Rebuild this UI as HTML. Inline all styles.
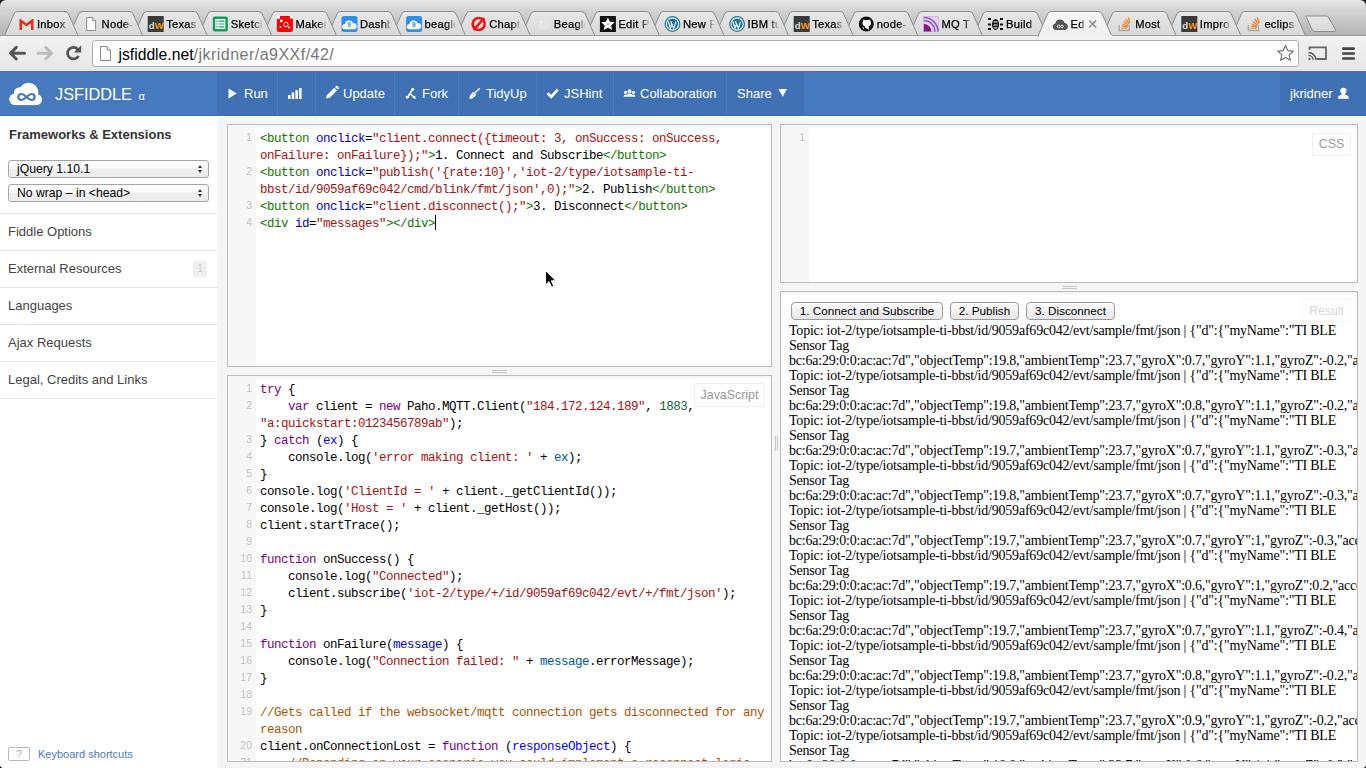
<!DOCTYPE html>
<html><head><meta charset="utf-8">
<style>
*{margin:0;padding:0;box-sizing:border-box}
html,body{width:1366px;height:768px;overflow:hidden;background:#f5f5f5;font-family:"Liberation Sans",sans-serif}
.a{position:absolute}
#tabstrip{left:0;top:0;width:1366px;height:36px;background:linear-gradient(#e6e6e6,#d2d2d2 40%,#c3c3c3)}
#toolbar{left:0;top:35px;width:1366px;height:37px;background:linear-gradient(#f2f2f2,#e6e6e6);border-top:1px solid #9e9e9e;border-bottom:1px solid #6a6a6a}
#omni{left:92px;top:40px;width:1207px;height:27px;background:#fff;border:1px solid #b0b0b0;border-radius:3px}
#url{left:118.5px;top:45px;font-size:16px;letter-spacing:0.48px;color:#777;white-space:pre;line-height:19px}
#url b{font-weight:normal;color:#000;font-size:15.7px;letter-spacing:0}
#header{left:0;top:72px;width:1366px;height:44px;background:#4679bd;border-bottom:1px solid #356cb5}
#actions{left:217px;top:72px;width:587px;height:43px;background:#3f71b4}
#user{left:1280px;top:72px;width:86px;height:43px;background:#3f71b4}
.sep{position:absolute;top:72px;width:1px;height:43px;background:#4a7bbd}
.nav{position:absolute;top:86px;color:#fff;font-size:13px;line-height:15px;white-space:pre}
#whiteline{left:0;top:116px;width:1366px;height:1px;background:#fdfdfb}
#sidebar{left:0;top:116px;width:217px;height:652px;background:#fff}
.sbitem{position:absolute;left:0;width:217px;height:37px;border-top:1px solid #e4e4e4;font-size:13px;color:#444;padding-left:8px;line-height:36px}
.panel{position:absolute;background:#fff;border:1px solid #bcbcbc;overflow:hidden;box-shadow:inset 0 2px 3px rgba(0,0,0,0.05)}
.gutter{position:absolute;left:0;top:0;width:28px;height:100%;background:#f7f7f7}
.code{position:absolute;font-family:"Liberation Mono",monospace;font-size:12.5px;letter-spacing:-0.5px;line-height:17px;margin-top:2px;white-space:pre;color:#000}
.ln{position:absolute;font-family:"Liberation Sans",sans-serif;font-size:10.5px;line-height:17px;margin-top:0px;color:#c4c4c4;text-align:right;width:24px;left:0}
.t{color:#170}.at{color:#00c}.s{color:#a11}.k{color:#708}.d{color:#00f}.v2{color:#05a}.n{color:#164}.c{color:#a50}
.label{position:absolute;border:1px solid #f0f0f0;background:#fff;color:#999;font-size:12.4px;text-align:center}
.hh{position:absolute;height:1px;background:#bbb}
.res{position:absolute;left:8px;font-family:"Liberation Serif",serif;font-size:14px;letter-spacing:-0.21px;line-height:15px;margin-top:0.5px;white-space:pre;color:#000}
.btn{position:absolute;height:18px;border:1px solid #9a9a9a;border-radius:4px;background:linear-gradient(#fff,#f0f0f0 50%,#e8e8e8);font-size:11.7px;line-height:16px;text-align:center;color:#000}
.sel{position:absolute;left:8px;width:201px;height:18px;border:1px solid #a6a6a6;border-radius:3px;background:linear-gradient(#fff,#fbfbfb 40%,#eeeeee 52%,#ececec);font-size:12.2px;line-height:16px;padding-left:8px;color:#000}
.sel:after{content:"";position:absolute;right:6px;top:3.5px;width:0;height:0;border-left:2.7px solid transparent;border-right:2.7px solid transparent;border-bottom:3.2px solid #333}
.sel:before{content:"";position:absolute;right:6px;top:8.8px;width:0;height:0;border-left:2.7px solid transparent;border-right:2.7px solid transparent;border-top:3.2px solid #333}
.hdl{position:absolute;background:#c4c4c4}
</style></head><body>
<svg class="a" style="left:0;top:0" width="1366" height="36" viewBox="0 0 1366 36">
<defs><linearGradient id="tsg" x1="0" y1="0" x2="0" y2="1"><stop offset="0" stop-color="#e7e7e7"/><stop offset="0.3" stop-color="#d3d3d3"/><stop offset="1" stop-color="#b2b2b2"/></linearGradient>
<linearGradient id="itg" x1="0" y1="0" x2="0" y2="1"><stop offset="0" stop-color="#e7e7e7"/><stop offset="1" stop-color="#d8d8d8"/></linearGradient>
<linearGradient id="atg" x1="0" y1="0" x2="0" y2="1"><stop offset="0" stop-color="#f6f6f6"/><stop offset="1" stop-color="#efefef"/></linearGradient>
<linearGradient id="fade" x1="0" y1="0" x2="1" y2="0"><stop offset="0" stop-color="#fff"/><stop offset="0.7" stop-color="#fff"/><stop offset="1" stop-color="#000"/></linearGradient>
</defs>
<rect width="1366" height="36" fill="url(#tsg)"/>
<path d="M0 0h6a6 6 0 0 0-6 6z" fill="#222"/><path d="M1366 0h-6a6 6 0 0 1 6 6z" fill="#222"/>
<path d="M1306 16.5 Q1305 16 1306.5 16 L1326 16 Q1328 16 1329 18 L1335.5 30 Q1336.5 31.5 1334.5 31.5 L1315 31.5 Q1313 31.5 1312 29.5 Z" fill="url(#itg)" stroke="#8c8c8c" stroke-width="1"/>
<path d="M1231.9 35.5 L1241.4 14 Q1242.4 11.5 1244.9 11.5 L1292.4 11.5 Q1294.9 11.5 1295.9 14 L1305.4 35.5 Z" fill="url(#itg)"/>
<path d="M1231.9 35.5 L1241.4 14 Q1242.4 11.5 1244.9 11.5 L1292.4 11.5 Q1294.9 11.5 1295.9 14 L1305.4 35.5" fill="none" stroke="#8e8e8e" stroke-width="1"/>
<g transform="translate(1245.9,16)"><path d="M2.5 9v5.5h10v-5.5" fill="none" stroke="#a8a8a8" stroke-width="1.3"/><path d="M4.5 12.3h6" stroke="#c8a070" stroke-width="1.2"/><path d="M5.2 10.2l5.7.9M5.8 8l5.3 2.3M7 5.5l4.6 3.6M9 3.2l3.5 4.6M11.5 1.5l1.8 5.3" stroke="#f48024" stroke-width="1.3"/></g>
<mask id="m12459" maskUnits="userSpaceOnUse" x="1263.4" y="12" width="33" height="24"><rect x="1263.4" y="12" width="33" height="24" fill="url(#fade)"/></mask>
<text x="1264.4" y="28.1" font-family="Liberation Sans" font-size="11.2" letter-spacing="0.25" fill="#000" stroke="#000" stroke-width="0.25" mask="url(#m12459)">eclips</text>
<path d="M1167.3 35.5 L1176.8 14 Q1177.8 11.5 1180.3 11.5 L1227.8 11.5 Q1230.3 11.5 1231.3 14 L1240.8 35.5 Z" fill="url(#itg)"/>
<path d="M1167.3 35.5 L1176.8 14 Q1177.8 11.5 1180.3 11.5 L1227.8 11.5 Q1230.3 11.5 1231.3 14 L1240.8 35.5" fill="none" stroke="#8e8e8e" stroke-width="1"/>
<g transform="translate(1181.3,16)"><rect x="0" y="0" width="16" height="16" fill="#3a3a3a"/><text x="1" y="12.5" font-family="Liberation Sans" font-weight="bold" font-size="9.5" fill="#ddd">d</text><text x="7" y="12.5" font-family="Liberation Sans" font-weight="bold" font-size="9.5" fill="#f39c12">W</text></g>
<mask id="m11813" maskUnits="userSpaceOnUse" x="1198.8" y="12" width="33" height="24"><rect x="1198.8" y="12" width="33" height="24" fill="url(#fade)"/></mask>
<text x="1199.8" y="28.1" font-family="Liberation Sans" font-size="11.2" letter-spacing="0.25" fill="#000" stroke="#000" stroke-width="0.25" mask="url(#m11813)">Impro</text>
<path d="M1102.7 35.5 L1112.2 14 Q1113.2 11.5 1115.7 11.5 L1163.2 11.5 Q1165.7 11.5 1166.7 14 L1176.2 35.5 Z" fill="url(#itg)"/>
<path d="M1102.7 35.5 L1112.2 14 Q1113.2 11.5 1115.7 11.5 L1163.2 11.5 Q1165.7 11.5 1166.7 14 L1176.2 35.5" fill="none" stroke="#8e8e8e" stroke-width="1"/>
<g transform="translate(1116.7,16)"><path d="M2.5 9v5.5h10v-5.5" fill="none" stroke="#a8a8a8" stroke-width="1.3"/><path d="M4.5 12.3h6" stroke="#c8a070" stroke-width="1.2"/><path d="M5.2 10.2l5.7.9M5.8 8l5.3 2.3M7 5.5l4.6 3.6M9 3.2l3.5 4.6M11.5 1.5l1.8 5.3" stroke="#f48024" stroke-width="1.3"/></g>
<mask id="m11167" maskUnits="userSpaceOnUse" x="1134.2" y="12" width="33" height="24"><rect x="1134.2" y="12" width="33" height="24" fill="url(#fade)"/></mask>
<text x="1135.2" y="28.1" font-family="Liberation Sans" font-size="11.2" letter-spacing="0.25" fill="#000" stroke="#000" stroke-width="0.25" mask="url(#m11167)">Most</text>
<path d="M973.5 35.5 L983.0 14 Q984.0 11.5 986.5 11.5 L1034.0 11.5 Q1036.5 11.5 1037.5 14 L1047.0 35.5 Z" fill="url(#itg)"/>
<path d="M973.5 35.5 L983.0 14 Q984.0 11.5 986.5 11.5 L1034.0 11.5 Q1036.5 11.5 1037.5 14 L1047.0 35.5" fill="none" stroke="#8e8e8e" stroke-width="1"/>
<g transform="translate(987.5,16)"><g fill="#111"><ellipse cx="8" cy="8.5" rx="3.5" ry="5.5"/><rect x="0.5" y="2" width="3" height="2"/><rect x="12.5" y="2" width="3" height="2"/><rect x="0.5" y="7.5" width="3" height="2"/><rect x="12.5" y="7.5" width="3" height="2"/><rect x="0.5" y="12" width="3" height="2"/><rect x="12.5" y="12" width="3" height="2"/></g><path d="M6 6h4M6 9h4M6 12h4" stroke="#fff" stroke-width="1"/></g>
<mask id="m9875" maskUnits="userSpaceOnUse" x="1005.0" y="12" width="33" height="24"><rect x="1005.0" y="12" width="33" height="24" fill="url(#fade)"/></mask>
<text x="1006.0" y="28.1" font-family="Liberation Sans" font-size="11.2" letter-spacing="0.25" fill="#000" stroke="#000" stroke-width="0.25" mask="url(#m9875)">Build</text>
<path d="M908.9 35.5 L918.4 14 Q919.4 11.5 921.9 11.5 L969.4 11.5 Q971.9 11.5 972.9 14 L982.4 35.5 Z" fill="url(#itg)"/>
<path d="M908.9 35.5 L918.4 14 Q919.4 11.5 921.9 11.5 L969.4 11.5 Q971.9 11.5 972.9 14 L982.4 35.5" fill="none" stroke="#8e8e8e" stroke-width="1"/>
<g transform="translate(922.9,16)"><rect x="0.5" y="0.5" width="15" height="15" fill="#e4d6f4" stroke="#cdb6e6" stroke-width="1"/><path d="M1 8A7.5 7.5 0 0 1 8.5 15.5H1z" fill="#86168f"/><path d="M1 4.5A11 11 0 0 1 12 15.5M1 1.5A14 14 0 0 1 15 15.5" fill="none" stroke="#8a5cc4" stroke-width="1.6"/></g>
<mask id="m9229" maskUnits="userSpaceOnUse" x="940.4" y="12" width="33" height="24"><rect x="940.4" y="12" width="33" height="24" fill="url(#fade)"/></mask>
<text x="941.4" y="28.1" font-family="Liberation Sans" font-size="11.2" letter-spacing="0.25" fill="#000" stroke="#000" stroke-width="0.25" mask="url(#m9229)">MQ T</text>
<path d="M844.3 35.5 L853.8 14 Q854.8 11.5 857.3 11.5 L904.8 11.5 Q907.3 11.5 908.3 14 L917.8 35.5 Z" fill="url(#itg)"/>
<path d="M844.3 35.5 L853.8 14 Q854.8 11.5 857.3 11.5 L904.8 11.5 Q907.3 11.5 908.3 14 L917.8 35.5" fill="none" stroke="#8e8e8e" stroke-width="1"/>
<g transform="translate(858.3,16)"><circle cx="8" cy="8" r="7.5" fill="#111"/><path d="M5.5 13.8v-2.2c-1.5.1-2-.9-2.3-1.5M10.5 13.8v-2.3c0-.7-.3-1-.6-1.2 1.5-.2 2.8-.9 2.8-3.2 0-.8-.3-1.4-.7-1.9.1-.3.2-1-.1-1.8-.6 0-1.3.4-1.8.8a6 6 0 0 0-3.3 0c-.5-.4-1.2-.8-1.8-.8-.3.8-.2 1.5-.1 1.8-.4.5-.7 1.1-.7 1.9 0 2.3 1.3 3 2.8 3.2-.3.2-.5.6-.6 1" fill="#fff"/><circle cx="8" cy="6.5" r="0" /></g>
<mask id="m8583" maskUnits="userSpaceOnUse" x="875.8" y="12" width="33" height="24"><rect x="875.8" y="12" width="33" height="24" fill="url(#fade)"/></mask>
<text x="876.8" y="28.1" font-family="Liberation Sans" font-size="11.2" letter-spacing="0.25" fill="#000" stroke="#000" stroke-width="0.25" mask="url(#m8583)">node-</text>
<path d="M779.7 35.5 L789.2 14 Q790.2 11.5 792.7 11.5 L840.2 11.5 Q842.7 11.5 843.7 14 L853.2 35.5 Z" fill="url(#itg)"/>
<path d="M779.7 35.5 L789.2 14 Q790.2 11.5 792.7 11.5 L840.2 11.5 Q842.7 11.5 843.7 14 L853.2 35.5" fill="none" stroke="#8e8e8e" stroke-width="1"/>
<g transform="translate(793.7,16)"><rect x="0" y="0" width="16" height="16" fill="#3a3a3a"/><text x="1" y="12.5" font-family="Liberation Sans" font-weight="bold" font-size="9.5" fill="#ddd">d</text><text x="7" y="12.5" font-family="Liberation Sans" font-weight="bold" font-size="9.5" fill="#f39c12">W</text></g>
<mask id="m7937" maskUnits="userSpaceOnUse" x="811.2" y="12" width="33" height="24"><rect x="811.2" y="12" width="33" height="24" fill="url(#fade)"/></mask>
<text x="812.2" y="28.1" font-family="Liberation Sans" font-size="11.2" letter-spacing="0.25" fill="#000" stroke="#000" stroke-width="0.25" mask="url(#m7937)">Texas</text>
<path d="M715.1 35.5 L724.6 14 Q725.6 11.5 728.1 11.5 L775.6 11.5 Q778.1 11.5 779.1 14 L788.6 35.5 Z" fill="url(#itg)"/>
<path d="M715.1 35.5 L724.6 14 Q725.6 11.5 728.1 11.5 L775.6 11.5 Q778.1 11.5 779.1 14 L788.6 35.5" fill="none" stroke="#8e8e8e" stroke-width="1"/>
<g transform="translate(729.1,16)"><circle cx="8" cy="8" r="7.3" fill="#fff" stroke="#21759b" stroke-width="1.3"/><circle cx="8" cy="8" r="5.6" fill="#21759b"/><path d="M3.6 5.2l2.4 6.8 1.6-4.5M6.2 5.2l3 7 2.3-6.6" stroke="#fff" stroke-width="1.1" fill="none"/></g>
<mask id="m7291" maskUnits="userSpaceOnUse" x="746.6" y="12" width="33" height="24"><rect x="746.6" y="12" width="33" height="24" fill="url(#fade)"/></mask>
<text x="747.6" y="28.1" font-family="Liberation Sans" font-size="11.2" letter-spacing="0.25" fill="#000" stroke="#000" stroke-width="0.25" mask="url(#m7291)">IBM tu</text>
<path d="M650.5 35.5 L660.0 14 Q661.0 11.5 663.5 11.5 L711.0 11.5 Q713.5 11.5 714.5 14 L724.0 35.5 Z" fill="url(#itg)"/>
<path d="M650.5 35.5 L660.0 14 Q661.0 11.5 663.5 11.5 L711.0 11.5 Q713.5 11.5 714.5 14 L724.0 35.5" fill="none" stroke="#8e8e8e" stroke-width="1"/>
<g transform="translate(664.5,16)"><circle cx="8" cy="8" r="7.3" fill="#fff" stroke="#21759b" stroke-width="1.3"/><circle cx="8" cy="8" r="5.6" fill="#21759b"/><path d="M3.6 5.2l2.4 6.8 1.6-4.5M6.2 5.2l3 7 2.3-6.6" stroke="#fff" stroke-width="1.1" fill="none"/></g>
<mask id="m6645" maskUnits="userSpaceOnUse" x="682.0" y="12" width="33" height="24"><rect x="682.0" y="12" width="33" height="24" fill="url(#fade)"/></mask>
<text x="683.0" y="28.1" font-family="Liberation Sans" font-size="11.2" letter-spacing="0.25" fill="#000" stroke="#000" stroke-width="0.25" mask="url(#m6645)">New P</text>
<path d="M585.9 35.5 L595.4 14 Q596.4 11.5 598.9 11.5 L646.4 11.5 Q648.9 11.5 649.9 14 L659.4 35.5 Z" fill="url(#itg)"/>
<path d="M585.9 35.5 L595.4 14 Q596.4 11.5 598.9 11.5 L646.4 11.5 Q648.9 11.5 649.9 14 L659.4 35.5" fill="none" stroke="#8e8e8e" stroke-width="1"/>
<g transform="translate(599.9,16)"><rect x="0" y="0" width="16" height="16" fill="#111"/><path d="M8 1.5l2 4.3 4.7.5-3.5 3.2 1 4.6L8 11.7l-4.2 2.4 1-4.6L1.3 6.3 6 5.8z" fill="#fff"/><circle cx="8" cy="8" r="1.3" fill="#bbb"/></g>
<mask id="m5999" maskUnits="userSpaceOnUse" x="617.4" y="12" width="33" height="24"><rect x="617.4" y="12" width="33" height="24" fill="url(#fade)"/></mask>
<text x="618.4" y="28.1" font-family="Liberation Sans" font-size="11.2" letter-spacing="0.25" fill="#000" stroke="#000" stroke-width="0.25" mask="url(#m5999)">Edit P</text>
<path d="M521.3 35.5 L530.8 14 Q531.8 11.5 534.3 11.5 L581.8 11.5 Q584.3 11.5 585.3 14 L594.8 35.5 Z" fill="url(#itg)"/>
<path d="M521.3 35.5 L530.8 14 Q531.8 11.5 534.3 11.5 L581.8 11.5 Q584.3 11.5 585.3 14 L594.8 35.5" fill="none" stroke="#8e8e8e" stroke-width="1"/>
<g transform="translate(535.3,16)"><circle cx="8" cy="8" r="6" fill="#e4e4e4"/><circle cx="6" cy="6" r="1.5" fill="#f0f0f0"/></g>
<mask id="m5353" maskUnits="userSpaceOnUse" x="552.8" y="12" width="33" height="24"><rect x="552.8" y="12" width="33" height="24" fill="url(#fade)"/></mask>
<text x="553.8" y="28.1" font-family="Liberation Sans" font-size="11.2" letter-spacing="0.25" fill="#000" stroke="#000" stroke-width="0.25" mask="url(#m5353)">Beagle</text>
<path d="M456.7 35.5 L466.2 14 Q467.2 11.5 469.7 11.5 L517.2 11.5 Q519.7 11.5 520.7 14 L530.2 35.5 Z" fill="url(#itg)"/>
<path d="M456.7 35.5 L466.2 14 Q467.2 11.5 469.7 11.5 L517.2 11.5 Q519.7 11.5 520.7 14 L530.2 35.5" fill="none" stroke="#8e8e8e" stroke-width="1"/>
<g transform="translate(470.7,16)"><circle cx="8" cy="8" r="6" fill="none" stroke="#e11" stroke-width="2.6"/><path d="M3 14L13.5 2" stroke="#e11" stroke-width="2.6"/></g>
<mask id="m4707" maskUnits="userSpaceOnUse" x="488.2" y="12" width="33" height="24"><rect x="488.2" y="12" width="33" height="24" fill="url(#fade)"/></mask>
<text x="489.2" y="28.1" font-family="Liberation Sans" font-size="11.2" letter-spacing="0.25" fill="#000" stroke="#000" stroke-width="0.25" mask="url(#m4707)">Chapt</text>
<path d="M392.1 35.5 L401.6 14 Q402.6 11.5 405.1 11.5 L452.6 11.5 Q455.1 11.5 456.1 14 L465.6 35.5 Z" fill="url(#itg)"/>
<path d="M392.1 35.5 L401.6 14 Q402.6 11.5 405.1 11.5 L452.6 11.5 Q455.1 11.5 456.1 14 L465.6 35.5" fill="none" stroke="#8e8e8e" stroke-width="1"/>
<g transform="translate(406.1,16)"><rect x="0" y="0" width="16" height="16" rx="2.5" fill="#2f8ee8"/><path d="M3.2 13.2a2.6 2.6 0 0 1 .2-5.2 4.2 4.2 0 0 1 8.1-.6 2.9 2.9 0 0 1 1.4 5.8z" fill="#fff"/><text x="5.6" y="10.6" font-family="Liberation Sans" font-weight="bold" font-size="7" fill="#2f8ee8">9</text></g>
<mask id="m4061" maskUnits="userSpaceOnUse" x="423.6" y="12" width="33" height="24"><rect x="423.6" y="12" width="33" height="24" fill="url(#fade)"/></mask>
<text x="424.6" y="28.1" font-family="Liberation Sans" font-size="11.2" letter-spacing="0.25" fill="#000" stroke="#000" stroke-width="0.25" mask="url(#m4061)">beagle</text>
<path d="M327.5 35.5 L337.0 14 Q338.0 11.5 340.5 11.5 L388.0 11.5 Q390.5 11.5 391.5 14 L401.0 35.5 Z" fill="url(#itg)"/>
<path d="M327.5 35.5 L337.0 14 Q338.0 11.5 340.5 11.5 L388.0 11.5 Q390.5 11.5 391.5 14 L401.0 35.5" fill="none" stroke="#8e8e8e" stroke-width="1"/>
<g transform="translate(341.5,16)"><rect x="0" y="0" width="16" height="16" rx="2.5" fill="#2f8ee8"/><path d="M3.2 13.2a2.6 2.6 0 0 1 .2-5.2 4.2 4.2 0 0 1 8.1-.6 2.9 2.9 0 0 1 1.4 5.8z" fill="#fff"/><text x="5.6" y="10.6" font-family="Liberation Sans" font-weight="bold" font-size="7" fill="#2f8ee8">9</text></g>
<mask id="m3415" maskUnits="userSpaceOnUse" x="359.0" y="12" width="33" height="24"><rect x="359.0" y="12" width="33" height="24" fill="url(#fade)"/></mask>
<text x="360.0" y="28.1" font-family="Liberation Sans" font-size="11.2" letter-spacing="0.25" fill="#000" stroke="#000" stroke-width="0.25" mask="url(#m3415)">Dashb</text>
<path d="M262.9 35.5 L272.4 14 Q273.4 11.5 275.9 11.5 L323.4 11.5 Q325.9 11.5 326.9 14 L336.4 35.5 Z" fill="url(#itg)"/>
<path d="M262.9 35.5 L272.4 14 Q273.4 11.5 275.9 11.5 L323.4 11.5 Q325.9 11.5 326.9 14 L336.4 35.5" fill="none" stroke="#8e8e8e" stroke-width="1"/>
<g transform="translate(276.9,16)"><path d="M0 3Q0 0 3 0H13Q16 0 16 3V14Q16 16 14 16H2Q0 16 0 14Z" fill="#f00"/><path d="M0 0h3v3H0zM13 0h3v2.5h-3z" fill="#fff"/><circle cx="4.5" cy="5" r="1.4" fill="#fff"/><circle cx="9" cy="8.5" r="2.2" fill="none" stroke="#fff" stroke-width="1"/><circle cx="12" cy="11.5" r="1.1" fill="#fff"/><circle cx="3.5" cy="11" r="0.9" fill="#fff"/></g>
<mask id="m2769" maskUnits="userSpaceOnUse" x="294.4" y="12" width="33" height="24"><rect x="294.4" y="12" width="33" height="24" fill="url(#fade)"/></mask>
<text x="295.4" y="28.1" font-family="Liberation Sans" font-size="11.2" letter-spacing="0.25" fill="#000" stroke="#000" stroke-width="0.25" mask="url(#m2769)">Maker</text>
<path d="M198.3 35.5 L207.8 14 Q208.8 11.5 211.3 11.5 L258.8 11.5 Q261.3 11.5 262.3 14 L271.8 35.5 Z" fill="url(#itg)"/>
<path d="M198.3 35.5 L207.8 14 Q208.8 11.5 211.3 11.5 L258.8 11.5 Q261.3 11.5 262.3 14 L271.8 35.5" fill="none" stroke="#8e8e8e" stroke-width="1"/>
<g transform="translate(212.3,16)"><rect x="0.5" y="0.5" width="15" height="15" rx="2" fill="#0f9d58"/><rect x="3" y="3" width="10" height="10" fill="#fff"/><path d="M4 4.5h1.5v1.2H4zM6.5 4.5H12v1.2H6.5zM4 7.4h1.5v1.2H4zM6.5 7.4H12v1.2H6.5zM4 10.3h1.5v1.2H4zM6.5 10.3H12v1.2H6.5z" fill="#0f9d58"/></g>
<mask id="m2123" maskUnits="userSpaceOnUse" x="229.8" y="12" width="33" height="24"><rect x="229.8" y="12" width="33" height="24" fill="url(#fade)"/></mask>
<text x="230.8" y="28.1" font-family="Liberation Sans" font-size="11.2" letter-spacing="0.25" fill="#000" stroke="#000" stroke-width="0.25" mask="url(#m2123)">Sketch</text>
<path d="M133.7 35.5 L143.2 14 Q144.2 11.5 146.7 11.5 L194.2 11.5 Q196.7 11.5 197.7 14 L207.2 35.5 Z" fill="url(#itg)"/>
<path d="M133.7 35.5 L143.2 14 Q144.2 11.5 146.7 11.5 L194.2 11.5 Q196.7 11.5 197.7 14 L207.2 35.5" fill="none" stroke="#8e8e8e" stroke-width="1"/>
<g transform="translate(147.7,16)"><rect x="0" y="0" width="16" height="16" fill="#3a3a3a"/><text x="1" y="12.5" font-family="Liberation Sans" font-weight="bold" font-size="9.5" fill="#ddd">d</text><text x="7" y="12.5" font-family="Liberation Sans" font-weight="bold" font-size="9.5" fill="#f39c12">W</text></g>
<mask id="m1477" maskUnits="userSpaceOnUse" x="165.2" y="12" width="33" height="24"><rect x="165.2" y="12" width="33" height="24" fill="url(#fade)"/></mask>
<text x="166.2" y="28.1" font-family="Liberation Sans" font-size="11.2" letter-spacing="0.25" fill="#000" stroke="#000" stroke-width="0.25" mask="url(#m1477)">Texas</text>
<path d="M69.1 35.5 L78.6 14 Q79.6 11.5 82.1 11.5 L129.6 11.5 Q132.1 11.5 133.1 14 L142.6 35.5 Z" fill="url(#itg)"/>
<path d="M69.1 35.5 L78.6 14 Q79.6 11.5 82.1 11.5 L129.6 11.5 Q132.1 11.5 133.1 14 L142.6 35.5" fill="none" stroke="#8e8e8e" stroke-width="1"/>
<g transform="translate(83.1,16)"><path d="M3.5 1.5h6l3 3v10h-9z" fill="#fff" stroke="#8a8a8a"/><path d="M9.5 1.5v3h3" fill="#eee" stroke="#8a8a8a"/></g>
<mask id="m831" maskUnits="userSpaceOnUse" x="100.6" y="12" width="33" height="24"><rect x="100.6" y="12" width="33" height="24" fill="url(#fade)"/></mask>
<text x="101.6" y="28.1" font-family="Liberation Sans" font-size="11.2" letter-spacing="0.25" fill="#000" stroke="#000" stroke-width="0.25" mask="url(#m831)">Node-</text>
<path d="M4.5 35.5 L14.0 14 Q15.0 11.5 17.5 11.5 L65.0 11.5 Q67.5 11.5 68.5 14 L78.0 35.5 Z" fill="url(#itg)"/>
<path d="M4.5 35.5 L14.0 14 Q15.0 11.5 17.5 11.5 L65.0 11.5 Q67.5 11.5 68.5 14 L78.0 35.5" fill="none" stroke="#8e8e8e" stroke-width="1"/>
<g transform="translate(18.5,16)"><rect x="1" y="3" width="14" height="11" fill="#e8e4dc"/><path d="M1 3v11h2.5V7.2L8 10.5l4.5-3.3V14H15V3h-1.2L8 7.6 2.2 3z" fill="#e12b24"/></g>
<mask id="m185" maskUnits="userSpaceOnUse" x="36.0" y="12" width="33" height="24"><rect x="36.0" y="12" width="33" height="24" fill="url(#fade)"/></mask>
<text x="37.0" y="28.1" font-family="Liberation Sans" font-size="11.2" letter-spacing="0.25" fill="#000" stroke="#000" stroke-width="0.25" mask="url(#m185)">Inbox</text>
<path d="M1038.1 35.5 L1047.6 14 Q1048.6 11.5 1051.1 11.5 L1098.6 11.5 Q1101.1 11.5 1102.1 14 L1111.6 35.5 Z" fill="url(#atg)"/>
<path d="M1038.1 35.5 L1047.6 14 Q1048.6 11.5 1051.1 11.5 L1098.6 11.5 Q1101.1 11.5 1102.1 14 L1111.6 35.5" fill="none" stroke="#8e8e8e" stroke-width="1"/>
<g transform="translate(1052.1,16)"><path d="M3.8 14a3.3 3.3 0 0 1-.6-6.5 4.8 4.8 0 0 1 9.3-.6A3.6 3.6 0 0 1 12.8 14z" fill="#555"/><path d="M5.2 10.5c0-1 .7-1.5 1.4-1.5 1.3 0 1.8 2.8 3.2 2.8.8 0 1.3-.6 1.3-1.3s-.5-1.3-1.3-1.3c-1.4 0-1.9 2.6-3.2 2.6-.7 0-1.4-.5-1.4-1.3z" fill="none" stroke="#fff" stroke-width="1"/></g>
<mask id="m10521" maskUnits="userSpaceOnUse" x="1069.6" y="12" width="33" height="24"><rect x="1069.6" y="12" width="16" height="24" fill="url(#fade)"/></mask>
<text x="1070.6" y="28.1" font-family="Liberation Sans" font-size="11.2" letter-spacing="0.25" fill="#000" stroke="#000" stroke-width="0.25" mask="url(#m10521)">Ed</text>
<path d="M1089.1 20.5l7 7M1096.1 20.5l-7 7" stroke="#8a8a8a" stroke-width="1.5"/>
<rect x="0" y="35" width="1366" height="1" fill="#8e8e8e"/>
</svg>
<div id="toolbar" class="a"></div>
<div class="a" style="left:1039px;top:35px;width:73px;height:1px;background:#f1f1f1"></div>
<div id="omni" class="a"></div>
<svg class="a" style="left:0;top:36px" width="1366" height="35" viewBox="0 36 1366 35">
<path d="M10.5 53.2 L16.3 47.4 M10.5 53.2 L16.3 59 M11 53.2 H24.5" stroke="#555" stroke-width="3" stroke-linecap="round" fill="none"/>
<path d="M51.5 53.2 L45.7 47.4 M51.5 53.2 L45.7 59 M51 53.2 H38" stroke="#bdbdbd" stroke-width="3" stroke-linecap="round" fill="none"/>
<path d="M78.5 55.8 A5.8 5.8 0 1 1 77.6 49.2" stroke="#555" stroke-width="2.8" fill="none"/>
<path d="M81.2 45.3 V52.6 H73.9 Z" fill="#555"/>
<path d="M100.5 46.5 h6.5 l3.5 3.5 v10.5 h-10 z" fill="#fff" stroke="#888" stroke-width="1"/>
<path d="M107 46.5 v3.5 h3.5" fill="#eee" stroke="#888" stroke-width="1"/>
<path d="M1285.5 45.5 L1287.8 50.6 L1293.3 51.1 L1289.1 54.8 L1290.4 60.2 L1285.5 57.4 L1280.6 60.2 L1281.9 54.8 L1277.7 51.1 L1283.2 50.6 Z" fill="#fff" stroke="#6b6b6b" stroke-width="1.1" stroke-linejoin="round"/>
<path d="M1309.5 50 V47.3 H1326 V59 H1316.5" fill="none" stroke="#666" stroke-width="1.8"/>
<path d="M1308.5 52.5 A7.5 7.5 0 0 1 1316 60 M1308.5 55.3 A4.7 4.7 0 0 1 1313.2 60" fill="none" stroke="#555" stroke-width="1.3"/>
<path d="M1308.5 57.8 A2.2 2.2 0 0 1 1310.7 60 H1308.5Z" fill="#555"/>
<path d="M1343.3 48.6 H1353.7 M1343.3 53.5 H1353.7 M1343.3 58.5 H1353.7" stroke="#444" stroke-width="2.6" stroke-linecap="round"/>
</svg>
<div id="url" class="a"><b>jsfiddle.net</b>/jkridner/a9XXf/42/</div>

<div id="header" class="a"></div>
<div id="actions" class="a"></div>
<div id="user" class="a"></div>
<div class="sep" style="left:277px"></div>
<div class="sep" style="left:315px"></div>
<div class="sep" style="left:394px"></div>
<div class="sep" style="left:458px"></div>
<div class="sep" style="left:536px"></div>
<div class="sep" style="left:613px"></div>
<div class="sep" style="left:726px"></div>
<div id="whiteline" class="a"></div>
<svg class="a" style="left:0;top:71px" width="217" height="45" viewBox="0 71 217 45">
<g fill="#fff"><circle cx="15" cy="99.3" r="5.8"/><circle cx="19.6" cy="92.8" r="5.6"/><circle cx="28.6" cy="92.6" r="9.8"/><circle cx="36.5" cy="99.6" r="5.5"/><rect x="15" y="95" width="21.5" height="10.1"/></g>
<path d="M26.5 97 C24.6 95.1 23.2 94 21.4 94 C19.6 94 18.4 95.3 18.4 97 C18.4 98.7 19.6 100 21.4 100 C23.2 100 24.6 98.9 26.5 97 C28.4 95.1 29.8 94 31.6 94 C33.4 94 34.6 95.3 34.6 97 C34.6 98.7 33.4 100 31.6 100 C29.8 100 28.4 98.9 26.5 97 Z" fill="none" stroke="#4679bd" stroke-width="2.2"/>
</svg>
<div class="a" style="left:55px;top:85px;color:#fff;font-size:16.3px;line-height:18px;white-space:pre">JSFIDDLE <span style="font-size:11px;margin-left:2px">&#945;</span></div>
<svg class="a" style="left:217px;top:71px" width="1149" height="45" viewBox="217 71 1149 45">
<path d="M228.5 88.5 L236.8 93.5 L228.5 98.5 Z" fill="#fff"/>
<path d="M288 95h2.5v4h-2.5zM291.7 92.6h2.5v6.4h-2.5zM295.4 90.3h2.5v8.7h-2.5zM299.1 88h2.5v11h-2.5z" fill="#fff"/>
<path d="M326 98.6 L327 95 L334.3 87.7 L337 90.4 L329.7 97.7 Z M335.1 86.9 L336 86 Q336.7 85.4 337.4 86 L338.7 87.3 Q339.3 88 338.7 88.7 L337.8 89.6 Z" fill="#fff"/>
<path d="M412.5 89.5 L407.5 97.5 M410 93.5 L414.5 97.5" fill="none" stroke="#fff" stroke-width="1.5"/>
<circle cx="412.7" cy="89.3" r="1.5" fill="#fff"/>
<path d="M405.3 95.8 L406.7 99 L409.5 97.2 Z M412.2 97.8 L415.6 99 L415.2 95.6 Z" fill="#fff"/>
<path d="M479.8 88.3 L474.5 93.2" stroke="#fff" stroke-width="1.4"/>
<path d="M473.2 91.8 L476.3 94.9 L472 98.7 L469 98.5 L470.2 96.3 L469.2 96.4 Z" fill="#fff"/>
<path d="M547.5 93.3 L551.2 96.8 L557.8 89.5" fill="none" stroke="#fff" stroke-width="2.7"/>
<circle cx="629.5" cy="91.2" r="1.9" fill="#fff"/><circle cx="625.6" cy="92.3" r="1.6" fill="#fff"/><circle cx="633.4" cy="92.3" r="1.6" fill="#fff"/>
<path d="M626.3 96.8 Q626.3 93.6 629.5 93.6 Q632.7 93.6 632.7 96.8 Z M623.6 96.8 Q623.6 94.4 625.6 94.4 Q627.2 94.4 627.4 96.8 Z M631.6 96.8 Q631.8 94.4 633.4 94.4 Q635.4 94.4 635.4 96.8 Z" fill="#fff"/>
<path d="M778.5 89 H787 L782.75 96.8 Z" fill="#fff"/>
<path d="M1338 98.8 C1338 96.2 1339 95.4 1341.6 94.7 L1341.6 93.6 C1340.6 92.9 1340.3 91.6 1340.3 90.4 C1340.3 88.8 1341.4 87.8 1343.4 87.8 C1345.4 87.8 1346.5 88.8 1346.5 90.4 C1346.5 91.6 1346.2 92.9 1345.2 93.6 L1345.2 94.7 C1347.8 95.4 1348.9 96.2 1348.9 98.8 Z" fill="#fff"/>
</svg>
<div class="nav" style="left:244px">Run</div>
<div class="nav" style="left:343px">Update</div>
<div class="nav" style="left:422px">Fork</div>
<div class="nav" style="left:486px">TidyUp</div>
<div class="nav" style="left:564px">JSHint</div>
<div class="nav" style="left:640px">Collaboration</div>
<div class="nav" style="left:737px">Share</div>
<div class="nav" style="left:1290px">jkridner</div>


<div id="sidebar" class="a"></div>
<div class="a" style="left:9px;top:127px;font-size:13px;font-weight:bold;color:#333;line-height:15px">Frameworks &amp; Extensions</div>
<div class="sel" style="top:160px">jQuery 1.10.1</div>
<div class="sel" style="top:184px">No wrap &#8211; in &lt;head&gt;</div>
<div class="a" style="left:193px;top:261px;width:14px;height:16px;background:#f0f0f0;border-radius:2px;color:#c8c8c8;font-size:10px;line-height:16px;text-align:center">1</div>
<div class="a" style="left:8px;top:747px;width:22px;height:14px;border:1px solid #b8b8b8;border-radius:2px;color:#aaa;font-size:10px;line-height:13px;text-align:center">?</div>
<div class="a" style="left:38px;top:747px;color:#4a7cc0;font-size:11px;line-height:14px">Keyboard shortcuts</div>
<div class="sbitem" style="top:213px">Fiddle Options</div>
<div class="sbitem" style="top:250px">External Resources</div>
<div class="sbitem" style="top:287px">Languages</div>
<div class="sbitem" style="top:324px">Ajax Requests</div>
<div class="sbitem" style="top:361px;border-bottom:1px solid #e4e4e4;height:38px">Legal, Credits and Links</div>

<!-- panels -->
<div class="panel" style="left:227px;top:124px;width:545px;height:243px"><div class="gutter"></div>
<div class="ln" style="top:4px">1</div>
<div class="ln" style="top:38px">2</div>
<div class="ln" style="top:72px">3</div>
<div class="ln" style="top:89px">4</div>
<div class="code" style="top:4px;left:32px"><span class="t">&lt;button</span> <span class="at">onclick</span>=<span class="s">"client.connect({timeout: 3, onSuccess: onSuccess,</span></div>
<div class="code" style="top:21px;left:32px"><span class="s">onFailure: onFailure});"</span><span class="t">&gt;</span>1. Connect and Subscribe<span class="t">&lt;/button&gt;</span></div>
<div class="code" style="top:38px;left:32px"><span class="t">&lt;button</span> <span class="at">onclick</span>=<span class="s">"publish('{rate:10}','iot-2/type/iotsample-ti-</span></div>
<div class="code" style="top:55px;left:32px"><span class="s">bbst/id/9059af69c042/cmd/blink/fmt/json',0);"</span><span class="t">&gt;</span>2. Publish<span class="t">&lt;/button&gt;</span></div>
<div class="code" style="top:72px;left:32px"><span class="t">&lt;button</span> <span class="at">onclick</span>=<span class="s">"client.disconnect();"</span><span class="t">&gt;</span>3. Disconnect<span class="t">&lt;/button&gt;</span></div>
<div class="code" style="top:89px;left:32px"><span class="t">&lt;div</span> <span class="at">id</span>=<span class="s">"messages"</span><span class="t">&gt;&lt;/div&gt;</span></div>
</div>
<div class="panel" style="left:227px;top:375px;width:545px;height:387px"><div class="gutter"></div>
<div class="ln" style="top:4px">1</div>
<div class="ln" style="top:21px">2</div>
<div class="ln" style="top:55px">3</div>
<div class="ln" style="top:72px">4</div>
<div class="ln" style="top:89px">5</div>
<div class="ln" style="top:106px">6</div>
<div class="ln" style="top:123px">7</div>
<div class="ln" style="top:140px">8</div>
<div class="ln" style="top:157px">9</div>
<div class="ln" style="top:174px">10</div>
<div class="ln" style="top:191px">11</div>
<div class="ln" style="top:208px">12</div>
<div class="ln" style="top:225px">13</div>
<div class="ln" style="top:242px">14</div>
<div class="ln" style="top:259px">15</div>
<div class="ln" style="top:276px">16</div>
<div class="ln" style="top:293px">17</div>
<div class="ln" style="top:310px">18</div>
<div class="ln" style="top:327px">19</div>
<div class="ln" style="top:361px">20</div>
<div class="ln" style="top:378px">21</div>
<div class="code" style="top:4px;left:32px"><span class="k">try</span> {</div>
<div class="code" style="top:21px;left:32px">    <span class="k">var</span> client = <span class="k">new</span> Paho.MQTT.Client(<span class="s">"184.172.124.189"</span>, <span class="n">1883</span>,</div>
<div class="code" style="top:38px;left:32px"><span class="s">"a:quickstart:0123456789ab"</span>);</div>
<div class="code" style="top:55px;left:32px">} <span class="k">catch</span> (<span class="d">ex</span>) {</div>
<div class="code" style="top:72px;left:32px">    console.log(<span class="s">'error making client: '</span> + <span class="v2">ex</span>);</div>
<div class="code" style="top:89px;left:32px">}</div>
<div class="code" style="top:106px;left:32px">console.log(<span class="s">'ClientId = '</span> + client._getClientId());</div>
<div class="code" style="top:123px;left:32px">console.log(<span class="s">'Host = '</span> + client._getHost());</div>
<div class="code" style="top:140px;left:32px">client.startTrace();</div>
<div class="code" style="top:157px;left:32px"></div>
<div class="code" style="top:174px;left:32px"><span class="k">function</span> onSuccess() {</div>
<div class="code" style="top:191px;left:32px">    console.log(<span class="s">"Connected"</span>);</div>
<div class="code" style="top:208px;left:32px">    client.subscribe(<span class="s">'iot-2/type/+/id/9059af69c042/evt/+/fmt/json'</span>);</div>
<div class="code" style="top:225px;left:32px">}</div>
<div class="code" style="top:242px;left:32px"></div>
<div class="code" style="top:259px;left:32px"><span class="k">function</span> onFailure(<span class="d">message</span>) {</div>
<div class="code" style="top:276px;left:32px">    console.log(<span class="s">"Connection failed: "</span> + <span class="v2">message</span>.errorMessage);</div>
<div class="code" style="top:293px;left:32px">}</div>
<div class="code" style="top:310px;left:32px"></div>
<div class="code" style="top:327px;left:32px"><span class="c">//Gets called if the websocket/mqtt connection gets disconnected for any</span></div>
<div class="code" style="top:344px;left:32px"><span class="c">reason</span></div>
<div class="code" style="top:361px;left:32px">client.onConnectionLost = <span class="k">function</span> (<span class="d">responseObject</span>) {</div>
<div class="code" style="top:378px;left:32px">    <span class="c">//Depending on your scenario you could implement a reconnect logic</span></div>
<div class="label" style="left:466px;top:7px;width:71px;height:24px;line-height:22px">JavaScript</div>
</div>
<div class="panel" style="left:780px;top:124px;width:578px;height:159px"><div class="gutter"></div>
<div class="ln" style="top:4px">1</div>
<div class="label" style="left:531px;top:8px;width:39px;height:23px;line-height:21px">CSS</div>
</div>
<div class="panel" style="left:780px;top:291px;width:578px;height:471px">
<div class="btn" style="left:10px;top:10px;width:152px">1. Connect and Subscribe</div>
<div class="btn" style="left:169px;top:10px;width:69px">2. Publish</div>
<div class="btn" style="left:245px;top:10px;width:89px">3. Disconnect</div>
<div class="label" style="left:521px;top:7px;width:49px;height:23px;line-height:22px;color:#d8d8d8;border-color:#f4f4f4">Result</div>
<div class="res" style="top:30px">Topic: iot-2/type/iotsample-ti-bbst/id/9059af69c042/evt/sample/fmt/json | {"d":{"myName":"TI BLE</div>
<div class="res" style="top:45px">Sensor Tag</div>
<div class="res" style="top:60px">bc:6a:29:0:0:ac:ac:7d","objectTemp":19.8,"ambientTemp":23.7,"gyroX":0.7,"gyroY":1.1,"gyroZ":-0.2,"accelX":0.1,"accelY":0.2</div>
<div class="res" style="top:75px">Topic: iot-2/type/iotsample-ti-bbst/id/9059af69c042/evt/sample/fmt/json | {"d":{"myName":"TI BLE</div>
<div class="res" style="top:90px">Sensor Tag</div>
<div class="res" style="top:105px">bc:6a:29:0:0:ac:ac:7d","objectTemp":19.8,"ambientTemp":23.7,"gyroX":0.8,"gyroY":1.1,"gyroZ":-0.2,"accelX":0.1,"accelY":0.2</div>
<div class="res" style="top:120px">Topic: iot-2/type/iotsample-ti-bbst/id/9059af69c042/evt/sample/fmt/json | {"d":{"myName":"TI BLE</div>
<div class="res" style="top:135px">Sensor Tag</div>
<div class="res" style="top:150px">bc:6a:29:0:0:ac:ac:7d","objectTemp":19.7,"ambientTemp":23.7,"gyroX":0.7,"gyroY":1.1,"gyroZ":-0.3,"accelX":0.1,"accelY":0.2</div>
<div class="res" style="top:165px">Topic: iot-2/type/iotsample-ti-bbst/id/9059af69c042/evt/sample/fmt/json | {"d":{"myName":"TI BLE</div>
<div class="res" style="top:180px">Sensor Tag</div>
<div class="res" style="top:195px">bc:6a:29:0:0:ac:ac:7d","objectTemp":19.8,"ambientTemp":23.7,"gyroX":0.7,"gyroY":1.1,"gyroZ":-0.3,"accelX":0.1,"accelY":0.2</div>
<div class="res" style="top:210px">Topic: iot-2/type/iotsample-ti-bbst/id/9059af69c042/evt/sample/fmt/json | {"d":{"myName":"TI BLE</div>
<div class="res" style="top:225px">Sensor Tag</div>
<div class="res" style="top:240px">bc:6a:29:0:0:ac:ac:7d","objectTemp":19.7,"ambientTemp":23.7,"gyroX":0.7,"gyroY":1,"gyroZ":-0.3,"accelX":0.1,"accelY":0.2</div>
<div class="res" style="top:255px">Topic: iot-2/type/iotsample-ti-bbst/id/9059af69c042/evt/sample/fmt/json | {"d":{"myName":"TI BLE</div>
<div class="res" style="top:270px">Sensor Tag</div>
<div class="res" style="top:285px">bc:6a:29:0:0:ac:ac:7d","objectTemp":19.7,"ambientTemp":23.7,"gyroX":0.6,"gyroY":1,"gyroZ":0.2,"accelX":0.1,"accelY":0.2</div>
<div class="res" style="top:300px">Topic: iot-2/type/iotsample-ti-bbst/id/9059af69c042/evt/sample/fmt/json | {"d":{"myName":"TI BLE</div>
<div class="res" style="top:315px">Sensor Tag</div>
<div class="res" style="top:330px">bc:6a:29:0:0:ac:ac:7d","objectTemp":19.7,"ambientTemp":23.7,"gyroX":0.7,"gyroY":1.1,"gyroZ":-0.4,"accelX":0.1,"accelY":0.2</div>
<div class="res" style="top:345px">Topic: iot-2/type/iotsample-ti-bbst/id/9059af69c042/evt/sample/fmt/json | {"d":{"myName":"TI BLE</div>
<div class="res" style="top:360px">Sensor Tag</div>
<div class="res" style="top:375px">bc:6a:29:0:0:ac:ac:7d","objectTemp":19.8,"ambientTemp":23.7,"gyroX":0.8,"gyroY":1.1,"gyroZ":-0.2,"accelX":0.1,"accelY":0.2</div>
<div class="res" style="top:390px">Topic: iot-2/type/iotsample-ti-bbst/id/9059af69c042/evt/sample/fmt/json | {"d":{"myName":"TI BLE</div>
<div class="res" style="top:405px">Sensor Tag</div>
<div class="res" style="top:420px">bc:6a:29:0:0:ac:ac:7d","objectTemp":19.7,"ambientTemp":23.7,"gyroX":0.9,"gyroY":1,"gyroZ":-0.2,"accelX":0.1,"accelY":0.2</div>
<div class="res" style="top:435px">Topic: iot-2/type/iotsample-ti-bbst/id/9059af69c042/evt/sample/fmt/json | {"d":{"myName":"TI BLE</div>
<div class="res" style="top:450px">Sensor Tag</div>
<div class="res" style="top:465px">bc:6a:29:0:0:ac:ac:7d","objectTemp":19.8,"ambientTemp":23.7,"gyroX":0.6,"gyroY":1.1,"gyroZ":-0.2,"accelX":0.1,"accelY":0.2</div>
</div>
<div class="hdl" style="left:492px;top:370px;width:15px;height:1px"></div>
<div class="hdl" style="left:492px;top:372px;width:15px;height:1px"></div>
<div class="hdl" style="left:1062px;top:286px;width:15px;height:1px"></div>
<div class="hdl" style="left:1062px;top:288px;width:15px;height:1px"></div>
<div class="hdl" style="left:775px;top:436px;width:1px;height:15px"></div>
<div class="hdl" style="left:777px;top:436px;width:1px;height:15px"></div>
<div class="a" style="left:435px;top:215px;width:1px;height:15px;background:#000"></div>
<svg class="a" style="left:544px;top:269px" width="14" height="20" viewBox="0 0 14 20"><path d="M1.5 1.5 V16 L5 12.6 L7.6 18.2 L9.8 17.2 L7.3 11.8 H12 Z" fill="#000" stroke="#fff" stroke-width="1"/></svg>
<svg class="a" style="left:0;top:764px" width="4" height="4" viewBox="0 0 4 4"><path d="M0 0.5 A3.5 3.5 0 0 0 3.5 4 H0Z" fill="#000"/></svg>
<svg class="a" style="left:1362px;top:764px" width="4" height="4" viewBox="0 0 4 4"><path d="M4 0.5 A3.5 3.5 0 0 1 0.5 4 H4Z" fill="#000"/></svg>
</body></html>
